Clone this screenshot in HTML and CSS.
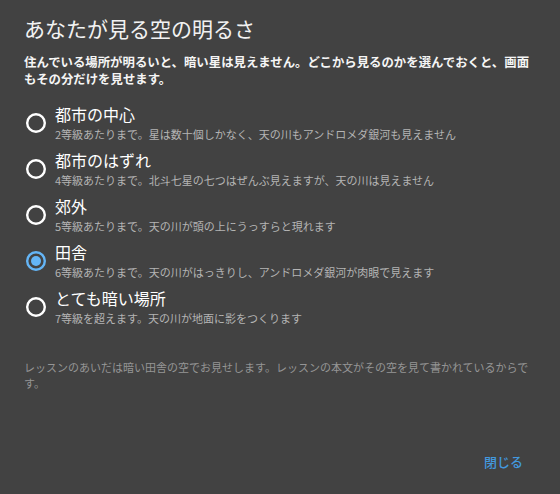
FILE: index.html
```html
<!DOCTYPE html>
<html lang="ja">
<head>
<meta charset="utf-8">
<title>あなたが見る空の明るさ</title>
<link rel="stylesheet" href="styles.css">
</head>
<body>
<div class="dialog">
  <h1 class="title">あなたが見る空の明るさ</h1>
  <p class="desc">住んでいる場所が明るいと、暗い星は見えません。どこから見るのかを選んでおくと、画面もその分だけを見せます。</p>
  <div class="options">
    <label class="option">
      <svg class="radio" viewBox="0 0 22 22" width="22" height="22"><circle cx="11" cy="11" r="8.8" fill="none" stroke="#ffffff" stroke-width="2.4"/></svg>
      <span class="text"><span class="label">都市の中心</span><span class="sub">2等級あたりまで。星は数十個しかなく、天の川もアンドロメダ銀河も見えません</span></span>
    </label>
    <label class="option">
      <svg class="radio" viewBox="0 0 22 22" width="22" height="22"><circle cx="11" cy="11" r="8.8" fill="none" stroke="#ffffff" stroke-width="2.4"/></svg>
      <span class="text"><span class="label">都市のはずれ</span><span class="sub">4等級あたりまで。北斗七星の七つはぜんぶ見えますが、天の川は見えません</span></span>
    </label>
    <label class="option">
      <svg class="radio" viewBox="0 0 22 22" width="22" height="22"><circle cx="11" cy="11" r="8.8" fill="none" stroke="#ffffff" stroke-width="2.4"/></svg>
      <span class="text"><span class="label">郊外</span><span class="sub">5等級あたりまで。天の川が頭の上にうっすらと現れます</span></span>
    </label>
    <label class="option">
      <svg class="radio" viewBox="0 0 22 22" width="22" height="22"><circle cx="11" cy="11" r="8.8" fill="none" stroke="#64b5f6" stroke-width="2.4"/><circle cx="11" cy="11" r="5" fill="#64b5f6"/></svg>
      <span class="text"><span class="label">田舎</span><span class="sub">6等級あたりまで。天の川がはっきりし、アンドロメダ銀河が肉眼で見えます</span></span>
    </label>
    <label class="option">
      <svg class="radio" viewBox="0 0 22 22" width="22" height="22"><circle cx="11" cy="11" r="8.8" fill="none" stroke="#ffffff" stroke-width="2.4"/></svg>
      <span class="text"><span class="label">とても暗い場所</span><span class="sub">7等級を超えます。天の川が地面に影をつくります</span></span>
    </label>
  </div>
  <p class="note">レッスンのあいだは暗い田舎の空でお見せします。レッスンの本文がその空を見て書かれているからです。</p>
  <div class="actions">
    <button class="btn">閉じる</button>
  </div>
</div>
</body>
</html>
```
FILE: styles.css
```css
html, body {
  margin: 0;
  padding: 0;
  background: #424242;
}
body {
  font-family: "Noto Sans CJK JP", "Noto Sans", sans-serif;
  color: #ffffff;
}
.dialog {
  box-sizing: border-box;
  width: 560px;
  height: 494px;
  padding: 12px 20px 14px 24px;
  display: flex;
  flex-direction: column;
  background: #424242;
}
.title {
  margin: 0;
  font-size: 21px;
  line-height: 32px;
  font-weight: 400;
  color: #f2f2f2;
}
.desc {
  margin: 10px 0 0;
  font-size: 12.4px;
  line-height: 17px;
  font-weight: 700;
  color: #f5f5f5;
}
.options {
  margin-top: 12px;
  display: flex;
  flex-direction: column;
}
.option {
  display: flex;
  align-items: center;
  height: 46px;
  box-sizing: border-box;
  padding: 3px 0;
}
.radio {
  flex: none;
  margin-left: 1px;
  margin-right: 8px;
}
.text {
  display: flex;
  flex-direction: column;
}
.label {
  font-size: 16px;
  line-height: 22px;
  color: #ffffff;
}
.sub {
  font-size: 11px;
  line-height: 18px;
  color: #b4b4b4;
}
.note {
  margin: 29px 0 0;
  font-size: 11px;
  line-height: 16px;
  color: #959595;
}
.actions {
  margin-top: auto;
  display: flex;
  justify-content: flex-end;
}
.btn {
  font-family: "Noto Sans CJK JP", "Noto Sans", sans-serif;
  font-size: 13px;
  line-height: 36px;
  height: 36px;
  padding: 0 12px;
  margin-right: 5px;
  border: none;
  background: transparent;
  color: #4398de;
  font-weight: 500;
}
```
